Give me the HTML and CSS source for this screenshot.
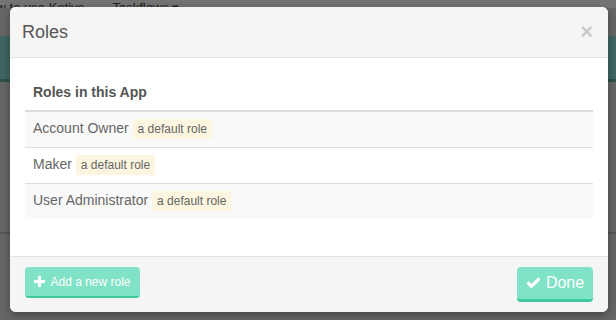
FILE: index.html
```html
<!DOCTYPE html>
<html lang="en">

<head>
  <meta charset="UTF-8">
  <meta name="viewport" content="width=device-width, initial-scale=1.0">
  <title>Kotive | Roles</title>
  <link rel="stylesheet" href="styles.css">
</head>

<body>
  <div class="page">
    <div class="page_topbar">
      <span class="page_brand">How to use Kotive</span>
      <span class="page_menu">Taskflows &#9662;</span>
    </div>
    <div class="page_band"></div>
    <div class="page_rest">
      <div class="page_rule"></div>
    </div>
  </div>

  <div class="modal">
    <div class="modal_header">
      <h4 class="modal_title">Roles</h4>
      <span class="modal_close">&times;</span>
    </div>

    <div class="modal_body">
      <table class="roles-table">
        <thead>
          <tr>
            <th>Roles in this App</th>
          </tr>
        </thead>
        <tbody>
          <tr>
            <td>Account Owner <span class="role-label">a default role</span></td>
          </tr>
          <tr>
            <td>Maker <span class="role-label">a default role</span></td>
          </tr>
          <tr>
            <td>User Administrator <span class="role-label">a default role</span></td>
          </tr>
        </tbody>
      </table>
    </div>

    <div class="modal_footer">
      <button class="btn btn-sm">
        <svg class="btn_icon" width="11" height="11" viewBox="0 0 11 11">
          <path d="M4 0h3v4h4v3H7v4H4V7H0V4h4z" fill="#fff" />
        </svg>
        Add a new role
      </button>
      <button class="btn btn-lg">
        <svg class="btn_icon" width="15" height="12" viewBox="0 0 15 12">
          <path d="M0.5 6.5l2.2-2.2 2.8 2.8L12.3 0.3l2.2 2.2-9 9z" fill="#fff" />
        </svg>
        Done
      </button>
    </div>
  </div>
</body>

</html>
```

FILE: styles.css
```css
* {
  box-sizing: border-box;
  padding: 0;
  margin: 0;
}

html {
  font-family: 'Liberation Sans', Arial, sans-serif;
}

body {
  background-color: #666666;
  width: 616px;
  height: 320px;
  overflow: hidden;
}

/* dimmed page behind the modal */
.page_topbar {
  height: 8px;
  overflow: hidden;
  background-color: #747474;
  color: #1e1e1e;
  font-size: 13px;
  line-height: 16px;
  white-space: nowrap;
}

.page_brand,
.page_menu {
  display: inline-block;
  margin-top: -8px;
}

.page_brand {
  margin-left: -20px;
}

.page_menu {
  margin-left: 24px;
}

.page_band {
  height: 46px;
  margin-top: 28px;
  background-color: #3f6761;
  border-bottom: 3px solid #2c534c;
}

.page_rest {
  padding-top: 150px;
}

.page_rule {
  height: 2px;
  background-color: #555555;
}

/* modal */
.modal {
  position: absolute;
  top: 7px;
  left: 10px;
  width: 598px;
  height: 305px;
  display: flex;
  flex-direction: column;
  background-color: #ffffff;
  border-radius: 6px;
  overflow: hidden;
  box-shadow: 0 3px 9px rgba(0, 0, 0, 0.35);
}

.modal_header {
  height: 51px;
  display: flex;
  align-items: center;
  justify-content: space-between;
  padding: 0 15px 0 12px;
  background-color: #f5f5f5;
  border-bottom: 1px solid #e3e3e3;
}

.modal_title {
  font-size: 18px;
  font-weight: normal;
  color: #555555;
}

.modal_close {
  font-size: 22px;
  font-weight: bold;
  line-height: 1;
  color: #cccccc;
}

.modal_body {
  flex: 1;
  padding: 15px 15px 0;
}

.roles-table {
  width: 100%;
  border-collapse: collapse;
  font-size: 14px;
  color: #666666;
}

.roles-table th {
  height: 38px;
  padding: 8px;
  text-align: left;
  color: #555555;
  border-bottom: 2px solid #dddddd;
}

.roles-table td {
  height: 36px;
  padding: 0 8px;
  border-top: 1px solid #dddddd;
}

.roles-table tbody tr:first-child td {
  border-top: none;
}

.roles-table tbody tr:nth-child(odd) {
  background-color: #f9f9f9;
}

.role-label {
  display: inline-block;
  padding: 3px 5px;
  font-size: 12px;
  color: #666666;
  background-color: #fcf6e0;
}

.modal_footer {
  height: 56px;
  display: flex;
  align-items: flex-start;
  justify-content: space-between;
  padding: 10px 15px 0;
  background-color: #f5f5f5;
  border-top: 1px solid #e3e3e3;
}

.btn {
  display: inline-flex;
  align-items: center;
  justify-content: center;
  white-space: nowrap;
  border: none;
  border-bottom: 2px solid #3cca9e;
  border-radius: 4px;
  background-color: #80e2c6;
  color: #ffffff;
  font-family: inherit;
}

.btn-sm {
  width: 115px;
  height: 31px;
  padding: 0 6px;
  font-size: 12px;
}

.btn-lg {
  width: 76px;
  height: 35px;
  padding: 0 8px;
  font-size: 16px;
  border-bottom-width: 3px;
}

.btn_icon {
  margin-right: 5px;
}
```
